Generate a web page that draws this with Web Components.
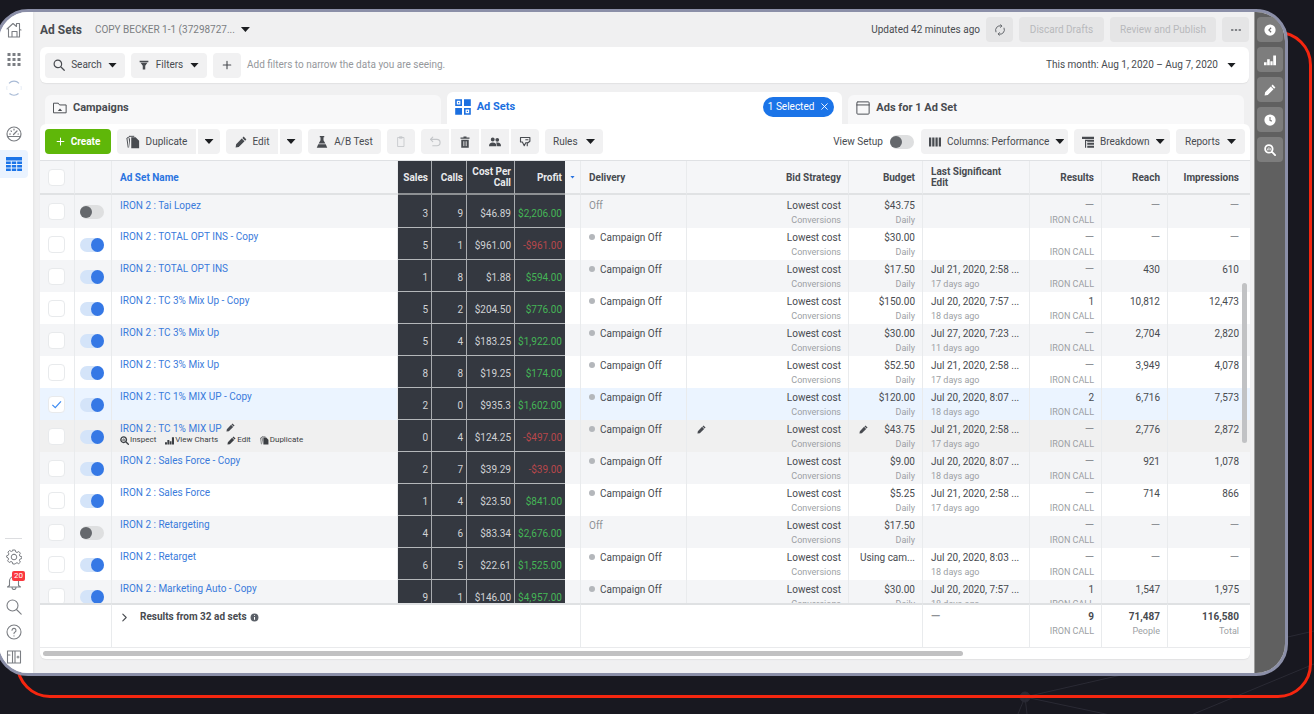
<!DOCTYPE html>
<html lang="en">
<head>
<meta charset="utf-8">
<meta name="viewport" content="width=device-width, initial-scale=1">
<title>Ad Sets</title>
<style>
  html, body { margin: 0; height: 100%; }
  body {
    background: #181820; color: #484b50; overflow: hidden;
    font: 10px/12px Roboto, "Liberation Sans", sans-serif;
  }
</style>
</head>
<body>
<ads-window>
  <side-nav slot="nav"></side-nav>
  <page-header></page-header>
  <filter-bar></filter-bar>
  <level-tabs></level-tabs>
  <ads-panel>
    <action-bar></action-bar>
    <adset-table></adset-table>
  </ads-panel>
  <tool-rail slot="rail"></tool-rail>
</ads-window>

<script>
const define = (name, html, setup) => {
  const template = document.createElement('template');
  template.innerHTML = '<style>:host,*,*::before,*::after{box-sizing:border-box}:host{display:block}[hidden]{display:none}</style>' + html;
  customElements.define(name, class extends HTMLElement {
    constructor() {
      super();
      this.attachShadow({ mode: 'open' }).append(template.content.cloneNode(true));
    }
    connectedCallback() { if (setup) setup.call(this, this.shadowRoot); }
  });
};

/* Icons share a 16-unit grid */
const line = (d, w = 1.3) => `<path d="${d}" fill="none" stroke="currentColor" stroke-width="${w}" stroke-linecap="round" stroke-linejoin="round"/>`;
const solid = d => `<path d="${d}" fill="currentColor"/>`;
const ICONS = {
  home: line('M1 7 7 1.5l3.5 3V1.5h3v6L15 8M2.500 7v8h11V7M6 15V9.500h5V15', 1.1),
  grid: [2, 7, 12].map(y => [1.500, 6.500, 11.500].map(x => `<rect x="${x}" y="${y}" width="3" height="3" fill="currentColor"/>`).join('')).join(''),
  ring: `<path d="M3 3.300a7 7 0 0 1 10 0M3.500 13.500a7 7 0 0 0 9 0" fill="none" stroke="#a9bbd6" stroke-width="1.200"/><path d="M1 6a7 7 0 0 0 0 4M15 6a7 7 0 0 1 0 4" fill="none" stroke="#e6ecf5"/>`,
  gauge: line('M8 1a7 7 0 1 1 0 14A7 7 0 0 1 8 1M1.800 10.500h12.400M7.500 8.500 11 5M3.500 8h1M5 4.800l.5.5M8 3.200v.8M12 8h.5', 1.2),
  table: `<path d="M0 1h16v14H0z" fill="#1b74e8"/><path d="M0 5h16M0 8.500h16M0 12h16M5.300 5v10M10.700 5v10" stroke="#eaf3ff" stroke-width="1"/>`,
  gear: line('M8 5.200a2.800 2.800 0 1 1 0 5.600 2.800 2.800 0 0 1 0-5.600M6.800 1h2.400l.5 1.900 1.300.6 1.800-1 1.600 1.700-1 1.700.5 1.300 1.900.5v1.800l-1.900.6-.5 1.200 1 1.800-1.700 1.600-1.700-1-1.300.6L9.200 15H6.800l-.5-1.900-1.300-.6-1.800 1-1.600-1.700 1-1.700-.6-1.300L.6 8.200l.1-1.500 1.600-.5.6-1.300-1-1.800 1.700-1.600 1.700 1 1.200-.6z', 1),
  bell: line('M3.500 11.500V7a4.500 4.500 0 0 1 9 0v4.500L14.500 13h-13zM6 13.500a2 2 0 0 0 4 0', 1.1),
  search: line('M6.500 1.500a5 5 0 1 1 0 10 5 5 0 0 1 0-10M10.300 10.300 15 15', 1.6),
  searchThin: line('M6.500 1a5.500 5.500 0 1 1 0 11 5.500 5.500 0 0 1 0-11M10.500 10.500 15.200 15.200', 1.1),
  help: line('M8 1a7 7 0 1 1 0 14A7 7 0 0 1 8 1M6 6.300a2 2 0 1 1 2.800 1.900Q8 8.600 8 9.600M8 11.800v.1', 1.1),
  book: line('M1.500 2H14.500V14H1.500zM6.500 2v12M9 2v12M1.500 6H4M11 8H13M12 7v2', 1.1),
  funnel: solid('M1 1h14v2.500H1zM2.500 4.500h11L10 9v6H6V9z'),
  plus: line('M8 2v12M2 8h12', 1.8),
  folder: line('M1 2.500h5l1.500 2H15v9H1z', 1.1) + solid('M5.500 11.500 8 8.500l2.500 3z'),
  adsets: `<g fill="none" stroke="currentColor" stroke-width="1.600"><path d="M1 1h5.200v5.200H1zM9.800 9.800H15V15H9.800z"/></g><path d="M9 .2h6.800V7H9zM.2 9H7v6.800H.2z" fill="currentColor"/><path d="M3 3h1.200v1.200H3zM11.800 11.800H13V13h-1.200z" fill="currentColor"/>`,
  frame: line('M2 1h12q1 0 1 1v12q0 1-1 1H2q-1 0-1-1V2q0-1 1-1M1 4.500h14', 1.1),
  copy: solid('M6 2.500h5l4 4V15H6zM4.500 14.500V4L3 3.500z') + line('M4 1.500h5M4 2 1 3.500l1.500 10.500', 1.1),
  pencil: solid('M11.500.8 15.200 4.500 13.500 6.200 9.800 2.500zM9 3.300 12.700 7 5 14.500.8 15.200 1.500 11z'),
  flask: solid('M5 0h6v1.800h-1v4L12.500 10H3.500L6 5.800v-4H5zM3 11h10l2 4.800H1z'),
  clip: line('M4 2h8v12H4zM6.500 1h3v2h-3z', 1.1),
  undo: line('M2 4.500h8.500a4 4 0 0 1 0 8.500H5M5 1.500 2 4.500l3 3', 1.5),
  trash: solid('M6 .5h4V2h4v1.800H2V2h4zM3 5h10v10.500H3z') + `<path d="M6 7v6.500M8 7v6.500M10 7v6.500" stroke="#f1f1f2" stroke-width=".8"/>`,
  people: solid('M5 2a2.600 2.600 0 1 1 0 5.200A2.600 2.600 0 0 1 5 2M0 13.500q0-5 5-5t5 5zM11 2.500a2.200 2.200 0 1 1 0 5 2.200 2.200 0 0 1 0-5M9.500 8.700q6.500-1.200 6.500 4.800h-5z'),
  pin: line('M2 2h12.500v5l-2.500 2H9l-2 4-2.500-5H2z', 1.5) + line('M9 5h3M11 9v4', 1.5),
  columns: solid('M0 2h3v12H0zM4.300 2h3v12h-3zM8.600 2h3v12h-3zM13 2h3v12h-3z'),
  breakdown: solid('M0 1h16v3H0zM4 5h3v1.500H4zM7 5h9v2.500H7zM7 9h9v2.500H7zM7 13h9v2.500H7zM4 5h1.500v10.500H4z'),
  refresh: line('M2.500 10.500a6 6 0 0 1 7-8M13.500 5.500a6 6 0 0 1-7 8M9 1l1.500 1.800L8.800 4.500M7 15l-1.500-1.800 1.700-1.700', 1.3),
  more: solid('M1.500 7h3v2h-3zM6.500 7h3v2h-3zM11.500 7h3v2h-3z'),
  close: line('M3 3l10 10M13 3 3 13', 1.6),
  back: `<circle cx="8" cy="8" r="7.500" fill="currentColor"/><path d="M9.500 5 6.500 8l3 3" fill="none" stroke="#6b6b6b" stroke-width="1.500"/>`,
  clock: `<circle cx="8" cy="8" r="7.500" fill="currentColor"/><path d="M8 4v4.500l2.500 1" fill="none" stroke="#7d7d7d" stroke-width="1.500"/>`,
  chart: solid('M0 11h3.500v4H0zM4.200 7h3.500v8H4.200zM8.500 9.500h3v5.500h-3zM12.300 2H16v13h-3.700z'),
  inspect: line('M6.500 1.500a5 5 0 1 1 0 10 5 5 0 0 1 0-10M10.300 10.300 14.800 14.800', 2.4) + line('M4.800 8V6.500M6.500 8V4.800M8.300 8V6', 1.1),
  chevron: line('M5 2l6 6-6 6', 2),
  info: `<circle cx="8" cy="8" r="7" fill="#5b6068"/><path d="M8 7v5M8 4v1.500" stroke="#fff" stroke-width="1.800"/>`,
  check: `<path d="M2 8.500 6.200 12.500 14.500 3.500" fill="none" stroke="#3d8bf2" stroke-width="1.800"/>`
};
define('ui-icon', '<style>:host{display:inline-flex;flex:none;width:var(--size,12px);height:var(--size,12px)}svg{width:100%;height:100%;display:block}</style><svg viewBox="0 0 16 16" aria-hidden="true"></svg>', function (root) {
  root.querySelector('svg').innerHTML = ICONS[this.getAttribute('name')];
});

define('ui-caret', '<style>:host{flex:none;width:9px;height:5px;background:#1c1e21;clip-path:polygon(0 0,100% 0,50% 100%)}</style>');

define('ui-button', `<style>
  :host { display: flex; flex: none; height: 25px; }
  button { width: 100%; height: 100%; margin: 0; border: 0; border-radius: var(--radius, 4px);
    display: flex; align-items: center; justify-content: center; gap: 6px; white-space: nowrap;
    background: var(--fill, #f1f1f2); color: inherit; padding: 0 var(--pad, 8px); font: inherit; }
  :host([caret]) button { justify-content: space-between; }
</style><button type="button"><slot></slot></button>`, function (root) {
  const b = root.querySelector('button');
  if (this.title) { b.setAttribute('aria-label', this.title); this.removeAttribute('title'); }
  b.disabled = this.hasAttribute('disabled');
});

define('ui-switch', `<style>
  :host { display: block; flex: none; width: 24px; height: 14px; }
  input { appearance: none; position: relative; display: flex; align-items: center; margin: 0; width: 100%; height: 100%; border-radius: 7px; background: #dedfe0; }
  input::before { content: ""; display: block; width: 12px; height: 12px; border-radius: 50%; background: #65686c; }
  input:checked { background: #d4e4f9; }
  input:checked::before { width: 14px; height: 14px; margin-left: 11px; background: #3578e5; }
</style><input type="checkbox" role="switch">`, function (root) {
  const i = root.querySelector('input');
  i.checked = this.hasAttribute('on');
  i.setAttribute('aria-label', this.getAttribute('name'));
});

define('ui-check', `<style>
  :host { display: block; width: 17px; height: 17px; position: relative; }
  input { appearance: none; display: block; margin: 0; width: 100%; height: 100%; border: 1px solid #e8eaec; border-radius: 4px; background: #fff; }
  ui-icon { --size: 11px; position: absolute; left: 3px; top: 3px; pointer-events: none; }
</style><input type="checkbox"><ui-icon name="check" hidden></ui-icon>`, function (root) {
  const i = root.querySelector('input'), on = this.hasAttribute('on');
  i.checked = on;
  i.setAttribute('aria-label', this.getAttribute('name'));
  root.querySelector('ui-icon').hidden = !on;
});

define('ads-window', `<style>
  :host { position: relative; height: 100vh; padding: 9px 26px 38px 0; overflow: hidden; }
  .net { position: absolute; right: 0; bottom: 0; width: 320px; height: 120px; }
  .outline { position: absolute; inset: 31px 2px 16px 16px; border: 3px solid #f5260f; border-radius: 34px; }
  .card { position: relative; display: flex; height: 100%; margin-left: -4px; border: 3px solid #8b8fa8; border-radius: 32px; overflow: hidden; background: #f0f0f1; }
  main { flex: 1; min-width: 0; display: flex; flex-direction: column; padding: 5px 4px 14px 7px; }
</style>
<svg class="net" viewBox="0 0 320 120" aria-hidden="true"><g stroke="#2a2a34" fill="none"><circle cx="31" cy="103" r="5" fill="#2a2a34"/><path d="M31 103 320 37M31 103 140 126M190 124 320 70M31 103 24 120M31 103 33 120"/></g></svg>
<div class="outline"></div>
<div class="card"><slot name="nav"></slot><main><slot></slot></main><slot name="rail"></slot></div>`);

define('side-nav', `<style>
  :host { flex: none; width: 34px; background: #fff; color: #7b7e83; box-shadow: 1px 0 2px #e3e3e4; }
  nav { height: 100%; display: flex; flex-direction: column; padding: 3px 5px 4px 1px; }
  a { color: inherit; display: flex; align-items: center; justify-content: center; width: 28px; height: 25px; position: relative; }
  .tile { height: 28px; border-radius: 0 4px 4px 0; background: #eaf3ff; }
  .plain { margin: 18px 0 2px; background: none; }
  .push { flex: 1; }
  hr { width: 17px; margin: 0 5px 5px; border: 0; border-top: 1px solid #dcdde0; }
  ui-icon { --size: 16px; }
  .top { height: 29px; }
  .badge { position: absolute; left: 12px; top: 2px; width: 13px; height: 10px; border-radius: 2px; background: #fa383e; color: #fff; font-size: 8px; line-height: 10px; text-align: center; }
</style><nav aria-label="Main">
  <a class="top" href="#" aria-label="Home"><ui-icon name="home"></ui-icon></a>
  <a class="top" href="#" aria-label="All tools"><ui-icon name="grid"></ui-icon></a>
  <a class="top" href="#" aria-label="Account"><ui-icon name="ring"></ui-icon></a>
  <a class="tile plain" href="#" aria-label="Overview"><ui-icon name="gauge"></ui-icon></a>
  <a class="tile" href="#" aria-label="Ads Manager"><ui-icon name="table"></ui-icon></a>
  <div class="push"></div>
  <hr>
  <a href="#" aria-label="Settings"><ui-icon name="gear"></ui-icon></a>
  <a href="#" aria-label="Notifications"><ui-icon name="bell"></ui-icon><span class="badge">20</span></a>
  <a href="#" aria-label="Search"><ui-icon name="searchThin"></ui-icon></a>
  <a href="#" aria-label="Help"><ui-icon name="help"></ui-icon></a>
  <a href="#" aria-label="Guide"><ui-icon name="book"></ui-icon></a>
</nav>`);

define('tool-rail', `<style>
  :host { flex: none; width: 31px; background: #606060; color: #fff; padding: 5px 2px; border-left: 1px solid #9b9b9b; }
  div { display: grid; gap: 5px; }
  ui-button { --fill: #7d7d7d; --pad: 0; }
</style><div>
  <ui-button title="Collapse"><ui-icon name="back"></ui-icon></ui-button>
  <ui-button title="Charts"><ui-icon name="chart"></ui-icon></ui-button>
  <ui-button title="Edit"><ui-icon name="pencil"></ui-icon></ui-button>
  <ui-button title="History"><ui-icon name="clock"></ui-icon></ui-button>
  <ui-button title="Inspect"><ui-icon name="inspect"></ui-icon></ui-button>
</div>`);

define('page-header', `<style>
  :host { display: flex; align-items: center; gap: 6px; height: 25px; margin-right: 1px; }
  h1 { margin: 0 7px 0 0; font-size: 12px; line-height: 16px; font-weight: 700; }
  button { display: flex; align-items: center; gap: 6px; border: 0; padding: 0; background: none; font: inherit; color: #7b7e82; }
  .space { flex: 1; }
  ui-button { --fill: #e5e5e6; --pad: 11px; color: #b8b9bc; }
  .sq { width: 27px; --pad: 0; color: #606368; }
</style>
<h1>Ad Sets</h1><button type="button">COPY BECKER 1-1 (37298727... <ui-caret></ui-caret></button>
<span class="space"></span><span>Updated 42 minutes ago</span>
<ui-button class="sq" title="Refresh"><ui-icon name="refresh"></ui-icon></ui-button>
<ui-button disabled style="width:85px;--pad:0">Discard Drafts</ui-button>
<ui-button disabled style="width:106px;--pad:0">Review and Publish</ui-button>
<ui-button class="sq" title="More"><ui-icon name="more"></ui-icon></ui-button>`);

define('filter-bar', `<style>
  :host { display: flex; flex: none; align-items: center; gap: 6px; height: 36px; margin: 5px 1px 0 0; padding: 0 13px 0 5px; background: #fff; border-radius: 6px; box-shadow: 0 1px 1px #e2e2e3; }
  .hint { color: #95989c; flex: 1; }
  .date { display: flex; align-items: center; gap: 9px; border: 0; padding: 0; background: none; font: inherit; color: inherit; }
</style>
<ui-button caret style="width:80px"><ui-icon name="search"></ui-icon>Search<ui-caret></ui-caret></ui-button>
<ui-button caret style="width:76px"><ui-icon name="funnel" style="--size:10px"></ui-icon>Filters<ui-caret></ui-caret></ui-button>
<ui-button style="width:28px;--pad:0" title="Add filter"><ui-icon name="plus" style="--size:10px"></ui-icon></ui-button>
<span class="hint">Add filters to narrow the data you are seeing.</span>
<button class="date" type="button">This month: Aug 1, 2020 – Aug 7, 2020 <ui-caret></ui-caret></button>`);

define('level-tabs', `<style>
  :host { display: flex; flex: none; align-items: flex-end; gap: 6px; padding: 0 6px 0 5px; margin-top: 9px; height: 32px; font-size: 11px; font-weight: 700; }
  a { flex: 1; display: flex; align-items: center; gap: 6px; height: 29px; padding: 0 8px 3px 8px; color: inherit; text-decoration: none; background: #f8f8f9; border-radius: 6px 6px 0 0; --size: 14px; }
  a.on { height: 32px; background: #fff; color: #1b6fe0; --size: 16px; }
  ui-button { margin-left: auto; height: 20px; --fill: #1b74e8; --radius: 10px; --pad: 5px; --size: 9px; color: #fff; font-size: 10px; font-weight: 400; }
</style>
<a href="#"><ui-icon name="folder"></ui-icon>Campaigns</a>
<a href="#" class="on"><ui-icon name="adsets"></ui-icon>Ad Sets<ui-button>1 Selected <ui-icon name="close"></ui-icon></ui-button></a>
<a href="#"><ui-icon name="frame"></ui-icon>Ads for 1 Ad Set</a>`);

define('ads-panel', `<style>
  :host { flex: 1; min-height: 0; display: flex; flex-direction: column; background: #fff; border-radius: 6px; box-shadow: 0 1px 1px #e2e2e3; overflow: hidden; }
</style><slot></slot>`);

define('action-bar', `<style>
  :host { display: flex; align-items: center; gap: 6px; height: 36px; padding: 0 5px 1px 5px; flex: none; }
  .group { display: flex; gap: 2px; }
  .space { flex: 1; }
  .sq { width: 28px; --pad: 0; }
  .arrow { width: 22px; --pad: 0; }
  .first { --radius: 4px 0 0 4px; }
  .mid { --radius: 0; }
  .last { --radius: 0 4px 4px 0; }
  .faint { color: #c4c6c9; }
  .create { width: 66px; --fill: #5fb709; color: #fff; font-weight: 700; --size: 9px; }
  .setup { display: flex; align-items: center; gap: 7px; margin-right: 1px; }
</style>
<ui-button class="create"><ui-icon name="plus"></ui-icon>Create</ui-button>
<div class="group"><ui-button class="first" style="width:79px"><ui-icon name="copy" style="--size:14px"></ui-icon>Duplicate</ui-button><ui-button class="arrow last" title="Duplicate options"><ui-caret></ui-caret></ui-button></div>
<div class="group"><ui-button class="first" style="width:52px"><ui-icon name="pencil"></ui-icon>Edit</ui-button><ui-button class="arrow last" title="Edit options"><ui-caret></ui-caret></ui-button></div>
<ui-button style="width:73px;--pad:0"><ui-icon name="flask"></ui-icon>A/B Test</ui-button>
<ui-button class="sq faint" title="Paste" disabled><ui-icon name="clip"></ui-icon></ui-button>
<div class="group"><ui-button class="sq first faint" title="Undo" disabled><ui-icon name="undo"></ui-icon></ui-button><ui-button class="sq mid" title="Delete"><ui-icon name="trash"></ui-icon></ui-button><ui-button class="sq mid" title="Audience"><ui-icon name="people"></ui-icon></ui-button><ui-button class="sq last" title="Pin"><ui-icon name="pin"></ui-icon></ui-button></div>
<ui-button style="width:58px" caret>Rules<ui-caret></ui-caret></ui-button>
<span class="space"></span>
<span class="setup">View Setup <ui-switch name="View Setup"></ui-switch></span>
<ui-button style="width:147px" caret><ui-icon name="columns"></ui-icon>Columns: Performance<ui-caret></ui-caret></ui-button>
<ui-button style="width:96px" caret><ui-icon name="breakdown"></ui-icon>Breakdown<ui-caret></ui-caret></ui-button>
<ui-button style="width:69px;--pad:9px" caret>Reports<ui-caret></ui-caret></ui-button>`);

/* name, on, sales, calls, cost per call, profit, budget, last edit, days ago, results, reach, impressions */
const ROWS = [
  ['IRON 2 : Tai Lopez', 0, 3, 9, '$46.89', '$2,206.00', '$43.75', '', '', '—', '—', '—'],
  ['IRON 2 : TOTAL OPT INS - Copy', 1, 5, 1, '$961.00', '-$961.00', '$30.00', '', '', '—', '—', '—'],
  ['IRON 2 : TOTAL OPT INS', 1, 1, 8, '$1.88', '$594.00', '$17.50', 'Jul 21, 2020, 2:58 ...', 17, '—', '430', '610'],
  ['IRON 2 : TC 3% Mix Up - Copy', 1, 5, 2, '$204.50', '$776.00', '$150.00', 'Jul 20, 2020, 7:57 ...', 18, '1', '10,812', '12,473'],
  ['IRON 2 : TC 3% Mix Up', 1, 5, 4, '$183.25', '$1,922.00', '$30.00', 'Jul 27, 2020, 7:23 ...', 11, '—', '2,704', '2,820'],
  ['IRON 2 : TC 3% Mix Up', 1, 8, 8, '$19.25', '$174.00', '$52.50', 'Jul 21, 2020, 2:58 ...', 17, '—', '3,949', '4,078'],
  ['IRON 2 : TC 1% MIX UP - Copy', 1, 2, 0, '$935.3', '$1,602.00', '$120.00', 'Jul 20, 2020, 8:07 ...', 18, '2', '6,716', '7,573'],
  ['IRON 2 : TC 1% MIX UP', 1, 0, 4, '$124.25', '-$497.00', '$43.75', 'Jul 21, 2020, 2:58 ...', 17, '—', '2,776', '2,872'],
  ['IRON 2 : Sales Force - Copy', 1, 2, 7, '$39.29', '-$39.00', '$9.00', 'Jul 20, 2020, 8:07 ...', 18, '—', '921', '1,078'],
  ['IRON 2 : Sales Force', 1, 1, 4, '$23.50', '$841.00', '$5.25', 'Jul 21, 2020, 2:58 ...', 17, '—', '714', '866'],
  ['IRON 2 : Retargeting', 0, 4, 6, '$83.34', '$2,676.00', '$17.50', '', '', '—', '—', '—'],
  ['IRON 2 : Retarget', 1, 6, 5, '$22.61', '$1,525.00', 'Using cam...', 'Jul 20, 2020, 8:03 ...', 18, '—', '—', '—'],
  ['IRON 2 : Marketing Auto - Copy', 1, 9, 1, '$146.00', '$4,957.00', '$30.00', 'Jul 20, 2020, 7:57 ...', 18, '1', '1,547', '1,975']
];
const SELECTED = 6, HOVERED = 7;
const dim = v => v === '—' ? '<span class="dash">—</span>' : v;
const pencil = '<ui-icon class="pen" name="pencil"></ui-icon>';
const rowHtml = ([name, on, sales, calls, cost, profit, budget, edit, days, results, reach, imp], i) => `
  <tr class="${i === SELECTED ? 'selected' : i === HOVERED ? 'hovered' : ''}">
    <td class="box"><ui-check name="Select ${name}" ${i === SELECTED ? 'on' : ''}></ui-check></td>
    <td class="sw"><ui-switch name="${name}" ${on ? 'on' : ''}></ui-switch></td>
    <td class="name"><a href="#">${name}</a>${i === HOVERED ? `${pencil}<div class="acts">
      <button type="button"><ui-icon name="inspect"></ui-icon>Inspect</button><button type="button"><ui-icon name="chart"></ui-icon>View Charts</button><button type="button"><ui-icon name="pencil"></ui-icon>Edit</button><button type="button"><ui-icon name="copy"></ui-icon>Duplicate</button></div>` : ''}</td>
    <td class="dk">${sales}</td><td class="dk">${calls}</td><td class="dk">${cost}</td><td class="dk ${profit[0] === '-' ? 'loss' : 'gain'}">${profit}</td>
    <td></td>
    <td>${on ? '<i class="dot"></i>Campaign Off' : '<span class="off">Off</span>'}</td>
    <td class="r">${i === HOVERED ? pencil : ''}Lowest cost<small>Conversions</small></td>
    <td class="r">${i === HOVERED ? pencil : ''}${budget}${budget[0] === '$' ? '<small>Daily</small>' : ''}</td>
    <td>${edit}${days ? `<small>${days} days ago</small>` : ''}</td>
    <td class="r">${dim(results)}<small>IRON CALL</small></td>
    <td class="r">${dim(reach)}</td>
    <td class="r last">${dim(imp)}</td>
  </tr>`;

define('adset-table', `<style>
  :host { flex: 1; min-height: 0; display: flex; flex-direction: column; }
  .view { flex: 1; min-height: 0; position: relative; overflow: hidden; border-top: 1px solid #dfe1e4; }
  table { width: 100%; table-layout: fixed; border-collapse: separate; border-spacing: 0; }
  thead th { position: sticky; top: 0; z-index: 2; height: 34px; background: #f5f6f8; border-bottom: 2px solid #e0e2e4; vertical-align: middle; line-height: 11px; }
  th, td { padding: 0 8px; text-align: left; border-right: 1px solid #e9ebed; white-space: nowrap; overflow: hidden; }
  thead th { white-space: normal; }
  td { height: 32px; padding-top: 4px; vertical-align: top; }
  .r { text-align: right; padding-right: 7px; }
  th.last, td.last { padding-right: 11px; border-right: 0; }
  th.nm { color: #2a74e0; }
  tbody tr:nth-child(odd) td { background: #f4f5f7; }
  tbody tr.selected td { background: #ebf4ff; }
  tbody tr.hovered td { background: #f0f0f0; }
  tbody tr td.dk:nth-child(n) { background: #343840; }
  small { display: block; font-size: 9px; line-height: 16px; color: #9c9fa4; }
  tbody tr:first-child td { height: 33px; }
  tbody tr:first-child td:not(.box, .sw) { padding-top: 5px; }
  th.box, td.box { padding: 8px 8px 0; }
  td.sw { padding: 10px 0 0 5px; }
  thead th.box { padding: 0 8px; }
  td.name { padding-top: 3px; }
  .name a { color: #3a7bdb; text-decoration: none; }
  .dk { background: #343840; color: #d0d2d5; text-align: right; padding: 4px 3px 0; line-height: 27px; border-right: 1px solid #a9acb0; border-bottom: 1px solid #b4b7ba; overflow: visible; }
  thead th.dk { background: #343840; color: #e9eaec; padding: 0 3px; line-height: 11px; border-bottom: 2px solid #8e9194; }
  .dk.edge { border-right: 0; }
  .gain { color: #44b556; border-right: 0; }
  .loss { color: #b8474b; border-right: 0; }
  .dot { display: inline-block; width: 6px; height: 6px; border-radius: 50%; background: #b4b7bb; margin-right: 5px; vertical-align: 1px; }
  .off, .dash { color: #8e9196; }
  .dash { font-size: 12px; line-height: 0; }
  th.sort { padding: 0 5px; }
  .tri { width: 5px; height: 3px; background: #2a74e0; clip-path: polygon(0 0,100% 0,50% 100%); }
  .pen { --size: 9px; margin-left: 4px; }
  .r .pen { float: left; margin: 1px 0 0 2px; }
  .acts { display: flex; gap: 9px; line-height: 10px; font-size: 8px; }
  .acts button { display: flex; align-items: center; gap: 1px; border: 0; padding: 0; background: none; font: inherit; line-height: 10px; color: #3c3f43; }
  .acts ui-icon { --size: 9px; }
  tfoot td { position: sticky; bottom: 0; z-index: 2; height: 45px; padding-top: 6px; background: #fff; border-top: 2px solid #dfe1e3; border-bottom: 1px solid #e9eaec; font-weight: 700; }
  tfoot small { font-weight: 400; }
  .sum { display: flex; align-items: center; gap: 3px; --size: 9px; }
  .sum button { display: flex; align-items: center; gap: 11px; border: 0; padding: 0; background: none; font: inherit; color: inherit; }
  .vbar { position: absolute; z-index: 3; right: 3px; top: 25%; height: 33%; width: 5px; border-radius: 3px; background: #c1c2c4; }
  .hbar { height: 5px; width: 76%; margin: 3px; border-radius: 3px; background: #c1c1c2; flex: none; }
</style>
<div class="view">
  <table>
    <colgroup><col style="width:35px"><col style="width:37px"><col><col style="width:34px"><col style="width:35px"><col style="width:48px"><col style="width:50px"><col style="width:16px"><col style="width:106px"><col style="width:162px"><col style="width:74px"><col style="width:107px"><col style="width:72px"><col style="width:66px"><col style="width:82px"></colgroup>
    <thead><tr>
      <th class="box"><ui-check name="Select all"></ui-check></th><th></th><th class="nm">Ad Set Name</th>
      <th class="dk">Sales</th><th class="dk">Calls</th><th class="dk">Cost Per Call</th><th class="dk edge">Profit</th>
      <th class="sort"><div class="tri"></div></th><th>Delivery</th><th class="r">Bid Strategy</th><th class="r">Budget</th><th>Last Significant<br>Edit</th><th class="r">Results</th><th class="r">Reach</th><th class="r last">Impressions</th>
    </tr></thead>
    <tbody></tbody>
    <tfoot><tr>
      <td colspan="2"></td>
      <td colspan="6"><div class="sum"><button type="button"><ui-icon name="chevron"></ui-icon>Results from 32 ad sets</button><ui-icon name="info"></ui-icon></div></td>
      <td colspan="3"></td><td><span class="dash">—</span></td>
      <td class="r">9<small>IRON CALL</small></td><td class="r">71,487<small>People</small></td><td class="r last">116,580<small>Total</small></td>
    </tr></tfoot>
  </table>
  <div class="vbar"></div>
</div>
<div class="hbar"></div>`, function (root) {
  root.querySelector('tbody').innerHTML = ROWS.map(rowHtml).join('');
});
</script>
</body>
</html>
